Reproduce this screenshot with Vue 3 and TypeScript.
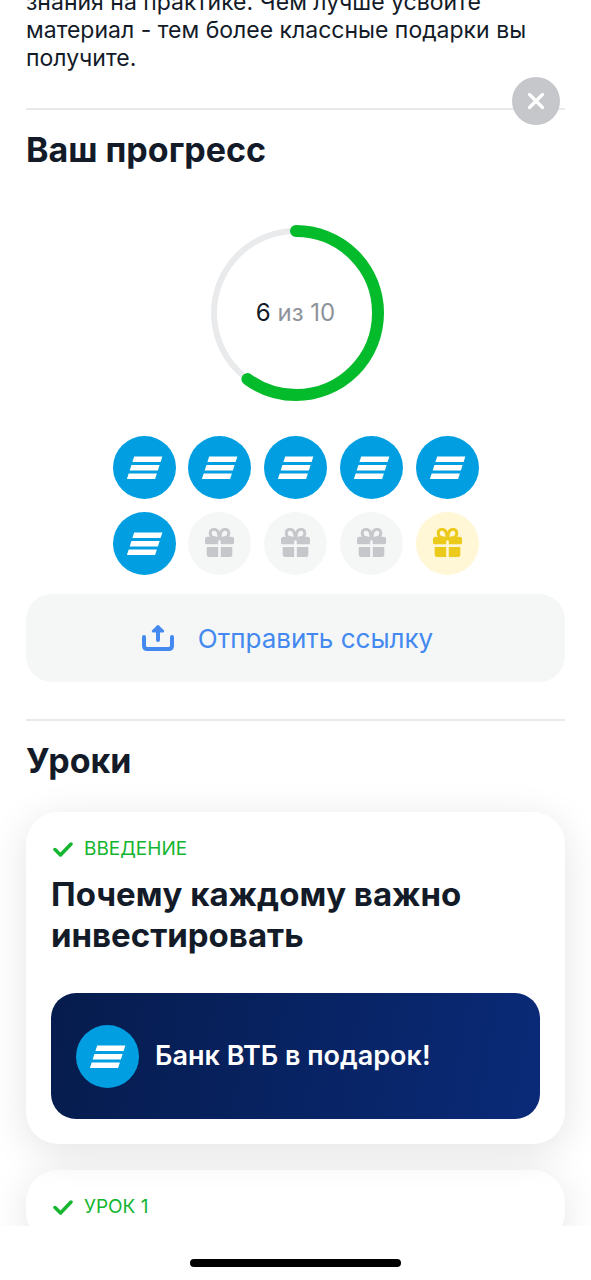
<script setup lang="ts">
import { computed, ref } from 'vue'

type Slot = 'bank' | 'gift' | 'prize'

interface Lesson {
  id: number
  label: string
  title: string
  reward: string
}

const done = 6
const total = 10
const radius = 82
const circumference = 2 * Math.PI * radius
const dash = computed(() => `${(circumference * done) / total} ${circumference}`)

const slots = computed<Slot[]>(() =>
  Array.from({ length: total }, (_, i) => (i < done ? 'bank' : i === total - 1 ? 'prize' : 'gift')),
)

const lessons: Lesson[] = [
  { id: 0, label: 'Введение', title: 'Почему каждому важно инвестировать', reward: 'Банк ВТБ в подарок!' },
  { id: 1, label: 'Урок 1', title: '', reward: '' },
]

const closed = ref(false)
</script>

<template>
  <div class="screen">
    <button v-if="!closed" class="close" type="button" aria-label="Закрыть" @click="closed = true">
      <svg viewBox="0 0 48 48" aria-hidden="true">
        <path d="M17.5 17.5 30.5 30.5M30.5 17.5 17.5 30.5" />
      </svg>
    </button>

    <main class="scroll">
      <p class="intro">
        знания на практике. Чем лучше усвоите<br />материал - тем более классные подарки вы<br />получите.
      </p>

      <section class="section">
        <h2 class="heading">Ваш прогресс</h2>
        <div class="ring">
          <svg viewBox="0 0 176 176" aria-hidden="true">
            <circle class="track" cx="88" cy="88" :r="radius" />
            <circle class="value" cx="88" cy="88" :r="radius" :stroke-dasharray="dash" transform="rotate(-90 88 88)" />
          </svg>
          <p class="count"><b>{{ done }}</b> из {{ total }}</p>
        </div>

        <ul class="slots">
          <li v-for="(slot, i) in slots" :key="i" class="slot" :class="slot">
            <svg v-if="slot === 'bank'" viewBox="0 0 63 63" aria-hidden="true">
              <path d="M21.2 20.5H49.4L47.6 26H19.4ZM18.4 29H46.6L44.9 34.4H16.7ZM15.7 37.4H43.9L42.1 43H13.9Z" />
            </svg>
            <svg v-else viewBox="0 0 63 63" aria-hidden="true">
              <path class="bow" d="M31 26C31 20.500 29 17.300 26 17.300C23.600 17.300 22.200 19 22.200 21C22.200 24 24.500 26 28 26M32 26C32 20.500 34 17.300 37 17.300C39.400 17.300 40.800 19 40.800 21C40.800 24 38.500 26 35 26" />
              <path d="M19.500 24.700H43.500A2.500 2.500 0 0 1 46 27.200V31A1.300 1.300 0 0 1 44.700 32.300H32.800V29.500A1.300 1.300 0 0 0 30.200 29.500V32.300H18.300A1.300 1.300 0 0 1 17 31V27.200A2.500 2.500 0 0 1 19.500 24.700ZM18.700 35H30.200V45H21.200A2.500 2.500 0 0 1 18.700 42.500ZM32.800 35H44.300V42.500A2.500 2.500 0 0 1 41.800 45H32.800Z" />
            </svg>
          </li>
        </ul>

        <button class="share" type="button">
          <svg viewBox="0 0 34 30" aria-hidden="true">
            <path class="tray" d="M4 13V21.500Q4 25 7.500 25H28.500Q32 25 32 21.500V13M18 16V6" />
            <path d="M17 1.500Q18 .5 19 1.500L23.800 6.300Q24.500 7.200 23.800 8Q23.300 8.500 22.500 8.500H13.500Q12.700 8.500 12.200 8Q11.500 7.200 12.200 6.300Z" />
          </svg>
          <span>Отправить ссылку</span>
        </button>
      </section>

      <section class="section">
        <h2 class="heading">Уроки</h2>
        <div class="lessons">
          <article v-for="lesson in lessons" :key="lesson.id" class="card">
            <p class="label">
              <svg viewBox="0 0 20 16" aria-hidden="true"><path d="M2 8.500 7.500 14 18 3" /></svg>
              {{ lesson.label }}
            </p>
            <h3 v-if="lesson.title" class="title">{{ lesson.title }}</h3>
            <div v-if="lesson.reward" class="reward">
              <span class="slot bank">
                <svg viewBox="0 0 63 63" aria-hidden="true">
                  <path d="M21.2 20.5H49.4L47.6 26H19.4ZM18.4 29H46.6L44.9 34.4H16.7ZM15.7 37.4H43.9L42.1 43H13.9Z" />
                </svg>
              </span>
              <strong>{{ lesson.reward }}</strong>
            </div>
          </article>
        </div>
      </section>
    </main>

    <footer class="home"><span class="indicator"></span></footer>
  </div>
</template>

<style>
body {
  margin: 0;
  background: #fff;
}
</style>

<style scoped>
.screen {
  position: relative;
  display: flex;
  flex-direction: column;
  height: 100vh;
  overflow: hidden;
  background: #fff;
  color: #131b29;
  font-family: Inter, 'Noto Sans', sans-serif;
}

.close {
  position: absolute;
  top: 77px;
  right: 31px;
  z-index: 2;
  width: 48px;
  height: 48px;
  padding: 0;
  border: 0;
  border-radius: 50%;
  background: #c6c7cb;
  cursor: pointer;
}

.close svg {
  display: block;
  fill: none;
  stroke: #fff;
  stroke-width: 3.2;
  stroke-linecap: round;
}

.scroll {
  flex: 1;
  min-height: 0;
  overflow: hidden;
  padding: 0 26px;
}

/* The first line is partly scrolled under the top edge. */
.intro {
  margin: -12px 0 36px;
  font-size: 23px;
  line-height: 28px;
}

.section {
  border-top: 2px solid #e9eaec;
  padding-bottom: 37px;
}

.heading {
  margin: 0;
  padding-top: 19px;
  font-size: 34px;
  line-height: 42px;
  font-weight: 700;
}

.ring {
  display: grid;
  place-items: center;
  margin: 54px 0 35px;
}

.ring > * {
  grid-area: 1 / 1;
}

.ring svg {
  width: 176px;
  height: 176px;
  fill: none;
}

.track {
  stroke: #e9eaec;
  stroke-width: 6;
}

.value {
  stroke: #04bb2c;
  stroke-width: 12;
  stroke-linecap: round;
}

.count {
  margin: 0;
  color: #8e939b;
  font-size: 24px;
  line-height: 28px;
}

.count b {
  color: #131b29;
  font-weight: 400;
}

.slots {
  display: grid;
  grid-template-columns: repeat(5, 63px);
  justify-content: space-between;
  row-gap: 13px;
  width: 366px;
  max-width: 100%;
  margin: 0 auto 19px;
  padding: 0;
  list-style: none;
}

.slot {
  flex: none;
  width: 63px;
  height: 63px;
  border-radius: 50%;
}

.slot svg {
  display: block;
  fill: currentColor;
}

.bank {
  background: #019fe1;
  color: #fff;
}

.gift {
  background: #f5f7f7;
  color: #c6c7cb;
}

.prize {
  background: #fff7d6;
  color: #ebca1c;
}

.slot .bow {
  fill: none;
  stroke: currentColor;
  stroke-width: 3;
}

.share {
  display: flex;
  align-items: center;
  justify-content: center;
  gap: 24px;
  width: 100%;
  height: 88px;
  padding: 2px 18px 0 0;
  border: 0;
  border-radius: 26px;
  background: #f5f7f7;
  color: #4389f0;
  font: 400 26px/32px Inter, 'Noto Sans', sans-serif;
  cursor: pointer;
}

.share svg {
  width: 34px;
  height: 30px;
  fill: currentColor;
}

.share .tray {
  fill: none;
  stroke: currentColor;
  stroke-width: 4;
  stroke-linecap: round;
}

.lessons {
  display: flex;
  flex-direction: column;
  gap: 26px;
  margin-top: 30px;
}

.card {
  padding: 25px;
  border-radius: 32px;
  background: #fff;
  box-shadow: 0 8px 40px rgba(0, 0, 0, 0.11);
}

.card:first-child {
  z-index: 1;
}

.label {
  display: flex;
  align-items: center;
  gap: 11px;
  margin: 0;
  padding-left: 2px;
  color: #14b52f;
  font-size: 19px;
  line-height: 24px;
  text-transform: uppercase;
}

.label svg {
  width: 20px;
  height: 16px;
  fill: none;
  stroke: currentColor;
  stroke-width: 3.5;
  stroke-linecap: round;
  stroke-linejoin: round;
}

.title {
  margin: 13px 0 37px;
  font-size: 33px;
  line-height: 41px;
  font-weight: 700;
}

.reward {
  display: flex;
  align-items: center;
  gap: 16px;
  height: 126px;
  padding: 0 25px;
  border-radius: 25px;
  background: linear-gradient(100deg, #061c4d, #0a2a78);
  color: #fff;
  font-size: 27px;
  line-height: 32px;
}

.reward strong {
  font-weight: 600;
}

.home {
  display: flex;
  justify-content: center;
  align-items: flex-end;
  height: 54px;
  padding-bottom: 13px;
  box-sizing: border-box;
  background: #fff;
}

.indicator {
  width: 211px;
  height: 8px;
  border-radius: 4px;
  background: #000;
}
</style>
